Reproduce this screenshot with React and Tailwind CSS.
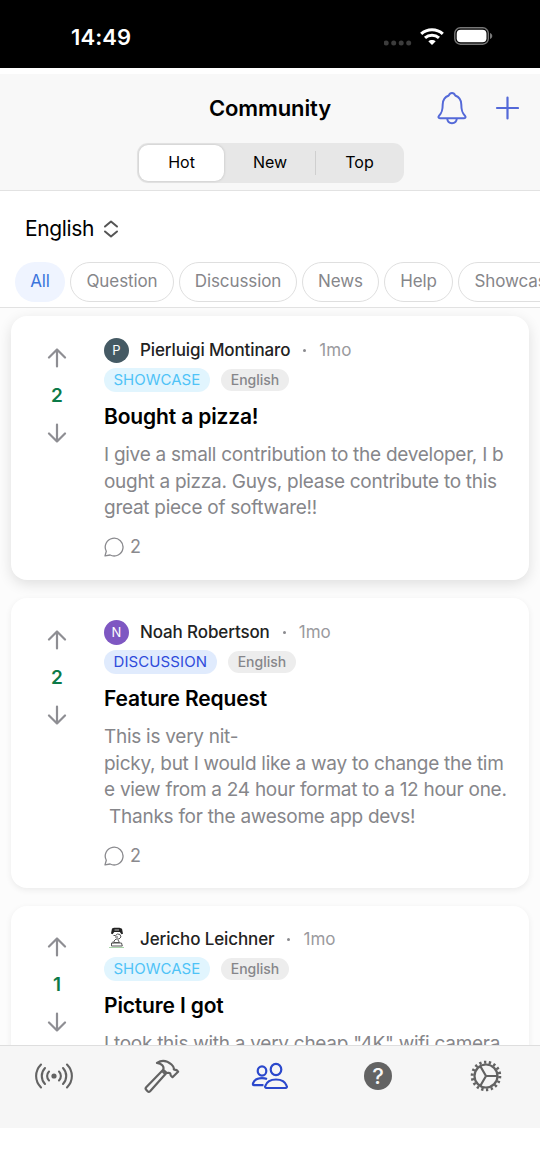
import React, { useState } from 'react';

const posts = [
  {
    id: 1,
    author: 'Pierluigi Montinaro',
    initial: 'P',
    avatarClass: 'bg-[#455a64]',
    votes: 2,
    tag: 'SHOWCASE',
    tagClass: 'bg-[#e1f5fe] text-[#4fc3f7]',
    title: 'Bought a pizza!',
    lines: [
      'I give a small contribution to the developer, I b',
      'ought a pizza. Guys, please contribute to this ',
      'great piece of software!!',
    ],
    comments: 2,
    cardClass: 'h-[264px] pt-[21px] shadow-[0_4px_14px_rgba(0,0,0,0.12)]',
  },
  {
    id: 2,
    author: 'Noah Robertson',
    initial: 'N',
    avatarClass: 'bg-[#7e57c2]',
    votes: 2,
    tag: 'DISCUSSION',
    tagClass: 'bg-[#e0ebfd] text-[#2f4bdb] tracking-[0.1px]',
    title: 'Feature Request',
    lines: [
      'This is very nit-',
      'picky, but I would like a way to change the tim',
      'e view from a 24 hour format to a 12 hour one.',
      ' Thanks for the awesome app devs!',
    ],
    comments: 2,
    cardClass: 'h-[290px] pt-[21px] shadow-[0_2px_6px_rgba(0,0,0,0.07)]',
  },
  {
    id: 3,
    author: 'Jericho Leichner',
    votes: 1,
    tag: 'SHOWCASE',
    tagClass: 'bg-[#e1f5fe] text-[#4fc3f7]',
    title: 'Picture I got',
    lines: ['I took this with a very cheap "4K" wifi camera'],
    comments: 0,
    cardClass: 'h-[264px] pt-5 shadow-[0_2px_6px_rgba(0,0,0,0.07)]',
  },
];

const sorts = [
  { label: 'Hot', className: 'w-[85px]' },
  { label: 'New', className: 'w-[91px] pl-px' },
  { label: 'Top', className: 'w-[86px] pl-px' },
];

const categories = [
  { label: 'All', className: 'w-[50px]' },
  { label: 'Question', className: 'w-[104px]' },
  { label: 'Discussion', className: 'w-[118px]' },
  { label: 'News', className: 'w-[77px]' },
  { label: 'Help', className: 'w-[69px]' },
  { label: 'Showcase', className: 'w-[115px]' },
];

const ArrowIcon = ({ down }) => (
  <svg
    viewBox="0 0 20 20"
    className={`h-5 w-5 ${down ? 'rotate-180' : ''}`}
    fill="none"
    stroke="#8e8e93"
    strokeWidth="2.2"
    strokeLinecap="round"
    strokeLinejoin="round"
  >
    <path d="M10 18.5V1.5M2 9.5l8-8 8 8" />
  </svg>
);

const CommentIcon = () => (
  <svg viewBox="0 0 20 20" className="h-5 w-5" fill="none" stroke="#8a8a8e" strokeWidth="1.3">
    <path d="M2.3 14.3A8.9 8.9 0 1 1 6.1 18L1 18.9Z" strokeLinejoin="round" />
  </svg>
);

const PortraitIcon = () => (
  <svg viewBox="0 0 25 25" className="h-[25px] w-[25px]" fill="none" stroke="#555" strokeWidth="1">
    <path d="M8 1.5 10 .7h5.500l2.500 1 1 5-1.500.6-1.700-2.300h-5.500L8.500 7.200 7 6.500Z" fill="#222" stroke="none" />
    <path d="M10.500 3h4.500" stroke="#bbb" />
    <path d="M9.500 8.500h2l2-1.500 2.500.5 1 2.500-2 2h-3l-2 2v1.500h5.500l-1.500-2.500M11 10h3M7.500 16h10l.8 3H7.500ZM9 16.500v-2" />
    <path d="M5 20.500h15" stroke="#a8d5a8" />
  </svg>
);

const StatusBar = () => (
  <div className="flex h-[68px] items-start justify-between bg-black pt-[22px] pr-[47px] pl-[71px] text-white">
    <span className="text-[22px] leading-[30px] font-semibold tracking-[0.1px]">14:49</span>
    <div className="flex h-7 items-center">
      <svg viewBox="0 0 28 6" className="mt-[13px] mr-2 h-[6px] w-7" fill="#3c3c3c">
        <circle cx="2.2" cy="3" r="2.5" />
        <circle cx="9.7" cy="3" r="2.5" />
        <circle cx="17.2" cy="3" r="2.5" />
        <circle cx="24.700" cy="3" r="2.5" />
      </svg>
      <svg viewBox="0 0 24 17" className="mr-[10px] h-[17px] w-6" fill="none" stroke="#fff" strokeWidth="3.1">
        <path d="M1.2 5.8C7.2.3 16.8.3 22.8 5.8" />
        <path d="M5 9.8c4-3.5 10-3.5 14 0" />
        <path d="M12 17 8.3 13.3c2-1.8 5.4-1.8 7.4 0Z" fill="#fff" stroke="none" />
      </svg>
      <svg viewBox="0 0 39 18" className="h-[18px] w-[39px]" fill="none">
        <rect x=".8" y=".8" width="33.5" height="16.4" rx="5.5" stroke="#777" strokeWidth="1.4" />
        <rect x="2.7" y="2.7" width="29.8" height="12.6" rx="4" fill="#fff" />
        <path d="M36 6c3 1 3 5 0 6Z" fill="#777" />
      </svg>
    </div>
  </div>
);

const Header = ({ sort, setSort }) => (
  <div className="mt-[6px] h-[117px] border-b border-[#e2e2e2] bg-[#f8f8f8]">
    <div className="grid h-[69px] grid-cols-[1fr_auto_1fr] items-center">
      <div />
      <h1 className="text-[22px] font-semibold tracking-[-0.1px] text-black">Community</h1>
      <div className="flex items-center justify-end gap-7 pr-[21px] pb-[2px]">
        <svg viewBox="0 0 30 34" className="h-[34px] w-[30px]" fill="none" stroke="#5469d8" strokeWidth="2" strokeLinejoin="round">
          <path d="M15 2c-1.700 0-2.700 1.200-3.200 2.500C8 6 5.700 9.200 5.700 13.500c0 6.500-1 8.500-3.600 11.200-1.200 1.400-.7 2.500.8 2.500h24.200c1.500 0 2-1.100.8-2.500-2.600-2.700-3.600-4.700-3.600-11.200 0-4.300-2.300-7.500-6.100-9C17.700 3.200 16.700 2 15 2Z" />
          <path d="M10.200 27.500c.3 3 2.200 4.700 4.800 4.700s4.500-1.700 4.800-4.700" />
        </svg>
        <svg viewBox="0 0 24 24" className="h-6 w-6" fill="none" stroke="#5469d8" strokeWidth="2.200" strokeLinecap="round">
          <path d="M12.500 1.500v21M2 12h21" />
        </svg>
      </div>
    </div>
    <div className="ml-[137px] flex h-10 w-[267px] items-center rounded-[11px] bg-[#e7e7e7] p-[2px] text-base text-black">
      {sorts.map(({ label, className }) => (
        <React.Fragment key={label}>
          {label === 'Top' && <span className="h-6 w-px bg-[#cfcfcf]" />}
          <button
            onClick={() => setSort(label)}
            className={`h-9 rounded-[9px] pb-[2px] ${className} ${
              sort === label ? 'bg-white shadow-[0_0_3px_rgba(0,0,0,0.18)]' : ''
            }`}
          >
            {label}
          </button>
        </React.Fragment>
      ))}
    </div>
  </div>
);

const Filters = ({ category, setCategory }) => (
  <div className="h-[117px] border-b border-[#e2e2e2] bg-white">
    <div className="flex h-[71px] items-center gap-[9px] pt-[5px] pl-[25px]">
      <span className="text-[21px] tracking-[-0.35px] text-black">English</span>
      <svg viewBox="0 0 16 18" className="h-[18px] w-4" fill="none" stroke="#555" strokeWidth="2" strokeLinecap="round" strokeLinejoin="round">
        <path d="m2 6.500 6-5 6 5M2 11.500l6 5 6-5" />
      </svg>
    </div>
    <div className="flex gap-[5px] overflow-hidden pl-[15px]">
      {categories.map((item) => (
        <button
          key={item.label}
          onClick={() => setCategory(item.label)}
          className={`h-10 shrink-0 rounded-full text-[17px] tracking-[-0.1px] whitespace-nowrap ${item.className} ${
            category === item.label
              ? 'bg-[#eff4ff] text-[#3b74dc]'
              : 'border border-[#dfdfdf] text-[#86868a]'
          }`}
        >
          {item.label}
        </button>
      ))}
    </div>
  </div>
);

const PostCard = ({ post }) => (
  <article className={`flex shrink-0 rounded-2xl bg-white ${post.cardClass}`}>
    <div className="mr-px flex w-[92px] shrink-0 flex-col items-center pt-[10.5px]">
      <ArrowIcon />
      <span className="mt-[13px] mb-3 text-[19px] leading-[30px] font-semibold text-[#0b7a48]">{post.votes}</span>
      <ArrowIcon down />
    </div>
    <div className="min-w-0 flex-1">
      <div className="flex h-[26px] items-center text-[17px] whitespace-nowrap">
        {post.initial ? (
          <span className={`flex h-[25px] w-[25px] items-center justify-center rounded-full pt-px text-[13px] text-white ${post.avatarClass}`}>
            {post.initial}
          </span>
        ) : (
          <PortraitIcon />
        )}
        <span className="ml-[11px] pt-[2px] font-medium tracking-[-0.12px] text-[#222]">{post.author}</span>
        <span className="mx-[13px] h-[3px] w-[3px] rounded-full bg-[#8a8a8e]" />
        <span className="pt-[2px] text-[#9a9a9e]">1mo</span>
      </div>
      <div className="mt-[5px] flex h-6 items-center gap-[11px]">
        <span className={`flex h-6 items-center rounded-full px-[9.5px] text-[15px] ${post.tagClass}`}>{post.tag}</span>
        <span className="flex h-[22px] items-center rounded-full bg-[#ededed] px-[10px] pb-px text-[14px] font-medium text-[#86868a]">English</span>
      </div>
      <h2 className="mt-[11px] text-[21px] leading-[28px] font-semibold tracking-[-0.15px] text-black">{post.title}</h2>
      <div className="mt-[11.4px] text-[19px] leading-[26.4px] tracking-[-0.27px] text-[#86868a]">
        {post.lines.map((line) => (
          <p key={line} className="whitespace-pre">{line}</p>
        ))}
      </div>
      <div className="mt-[15.5px] flex items-center gap-[6px] text-[18px] leading-[20px] text-[#8a8a8e]">
        <CommentIcon />
        {post.comments}
      </div>
    </div>
  </article>
);

const TabBar = () => (
  <nav className="h-[83px] shrink-0 border-t border-[#dedede] bg-[#f6f6f6] pt-[11px] text-[#636363]">
    <div className="grid grid-cols-5 place-items-center">
      <svg viewBox="0 0 40 38" className="h-[38px] w-10" fill="none" stroke="currentColor" strokeWidth="2.100" strokeLinecap="round">
        <circle cx="20" cy="19" r="2.600" fill="currentColor" stroke="none" />
        <path d="M15 14.500c-2.500 2.500-2.500 6.500 0 9M11 11c-4.300 4.500-4.300 11.500 0 16M7 7.500c-6.500 6.700-6.500 16.300 0 23" />
        <path d="M25 14.500c2.500 2.500 2.500 6.500 0 9M29 11c4.300 4.500 4.300 11.500 0 16M33 7.500c6.500 6.700 6.500 16.300 0 23" />
      </svg>
      <svg viewBox="0 0 38 38" className="mr-[2px] h-[38px] w-[38px]" fill="none" stroke="currentColor" strokeWidth="2.200" strokeLinejoin="round">
        <path d="M15 5.800C20 2.500 25 3.500 29.500 7.500c2.200 2 2.800 3 2.300 4.800 1.200.8 2.500.3 3.300 1.200l1 1.200-5.600 5.500-1.500-1.400c-.7-.7-.2-2-1.100-2.700-1.200-.7-2 .3-3.300-.3l-3.400-3.100c1.300-3.400-1.600-6-6.200-6.900Z" />
        <path d="m21.200 12.700-17 17.500c-.8.900-.8 1.700 0 2.500l1.400 1.500c.8.800 1.700.8 2.500 0l16.500-18.400M20 14l3.500 3.300" />
      </svg>
      <svg viewBox="0 0 38 38" className="h-[38px] w-[38px]" fill="none" stroke="#2b48cc" strokeWidth="2.200" strokeLinejoin="round">
        <ellipse cx="11" cy="14" rx="4.300" ry="4.700" />
        <path d="M12.500 28.200H3c-1.100 0-1.300-1-.8-2.200 1.400-3.400 4.500-4.800 8.800-4.800 2 0 3.600.3 5 .9" />
        <ellipse cx="25" cy="12.500" rx="5.300" ry="5.700" />
        <path d="M15.500 31c-1.300 0-1.700-1-1.200-2.200 1.500-4.300 5.500-6.300 10.700-6.300s9.200 2 10.700 6.300c.5 1.200.1 2.200-1.200 2.200Z" />
      </svg>
      <div className="flex h-[28px] w-[28px] items-center justify-center rounded-full bg-[#636363] text-[22px] leading-none font-medium text-[#f6f6f6]">?</div>
      <svg viewBox="0 0 32 32" className="h-8 w-8" fill="none" stroke="currentColor" strokeWidth="2.200">
        <circle cx="16" cy="16" r="11.500" />
        <circle cx="16" cy="16" r="13.800" strokeWidth="3" strokeDasharray="2.300 2.517" />
        <path d="M16 16h11.500M16 16l-5.800-10M16 16l-5.800 10" />
      </svg>
    </div>
  </nav>
);

export default function App() {
  const [sort, setSort] = useState('Hot');
  const [category, setCategory] = useState('All');

  return (
    <div className="flex h-[1171px] w-[540px] flex-col overflow-hidden bg-white pb-[43px] font-[Inter,sans-serif]">
      <StatusBar />
      <Header sort={sort} setSort={setSort} />
      <Filters category={category} setCategory={setCategory} />
      <main className="flex min-h-0 flex-1 flex-col gap-[18px] overflow-hidden bg-[#fcfcfc] px-[11px] pt-2">
        {posts.map((post) => (
          <PostCard key={post.id} post={post} />
        ))}
      </main>
      <TabBar />
    </div>
  );
}
